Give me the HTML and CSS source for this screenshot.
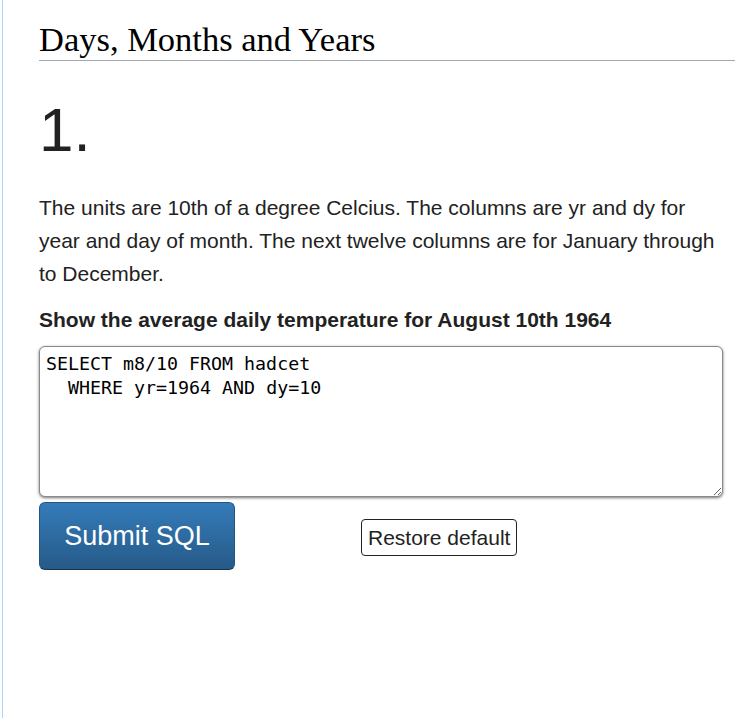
FILE: index.html
```html
<!DOCTYPE html>
<html>
<head>
<meta charset="utf-8">
<title>Days, Months and Years</title>
<link rel="stylesheet" href="styles.css">
</head>
<body>
<div class="page">
  <h1 class="title">Days, Months and Years</h1>
  <div class="qnum">1.</div>
  <p class="intro">The units are 10th of a degree Celcius. The columns are yr and dy for year and day of month. The next twelve columns are for January through to December.</p>
  <p class="task">Show the average daily temperature for August 10th 1964</p>
  <textarea class="sql" spellcheck="false">SELECT m8/10 FROM hadcet
  WHERE yr=1964 AND dy=10</textarea>
  <div class="actions">
    <button class="submit">Submit SQL</button>
    <button class="restore">Restore default</button>
  </div>
</div>
</body>
</html>
```

FILE: styles.css
```css
html, body {
  margin: 0;
  padding: 0;
  background: #fff;
}
body {
  overflow: hidden;
}
.page {
  margin-left: 2px;
  border-left: 1px solid #a7d7f9;
  padding-left: 36px;
  min-height: 100vh;
  box-sizing: border-box;
  padding-top: 18px;
  font-family: "Liberation Sans", Arial, sans-serif;
  color: #222;
}
.title {
  margin: 0;
  font-family: "Liberation Serif", "Times New Roman", serif;
  font-weight: normal;
  font-size: 34.5px;
  line-height: 42px;
  color: #000;
  border-bottom: 1px solid #a2a9b1;
}
.qnum {
  margin-top: 37px;
  font-size: 62px;
  line-height: 64px;
  color: #222;
}
.intro {
  margin: 29px 0 0;
  max-width: 684px;
  font-size: 21px;
  line-height: 33px;
}
.task {
  margin: 13px 0 0;
  font-size: 21px;
  line-height: 33px;
  font-weight: bold;
}
.sql {
  display: block;
  margin-top: 10px;
  width: 684px;
  height: 151px;
  box-sizing: border-box;
  padding: 5px 6px;
  font-family: "DejaVu Sans Mono", "Liberation Mono", monospace;
  font-size: 18.3px;
  line-height: 24px;
  color: #000;
  border: 1px solid #8a8a8a;
  border-radius: 6px;
  box-shadow: 0 1px 3px rgba(0, 0, 0, 0.55);
  outline: none;
}
.actions {
  display: flex;
  align-items: center;
  margin-top: 5px;
}
.submit {
  width: 196px;
  height: 68px;
  padding: 0;
  font-family: "Liberation Sans", Arial, sans-serif;
  font-size: 27px;
  color: #fff;
  background: linear-gradient(to bottom, #347bb9 0%, #265a88 100%);
  border: 1px solid #245580;
  border-bottom-color: #16334f;
  border-radius: 6px;
}
.restore {
  margin-left: 126px;
  margin-top: 3px;
  padding: 5px 6px;
  font-family: "Liberation Sans", Arial, sans-serif;
  font-size: 21px;
  line-height: 25px;
  color: #222;
  background: #fff;
  border: 1px solid #222;
  border-radius: 4px;
}
```
